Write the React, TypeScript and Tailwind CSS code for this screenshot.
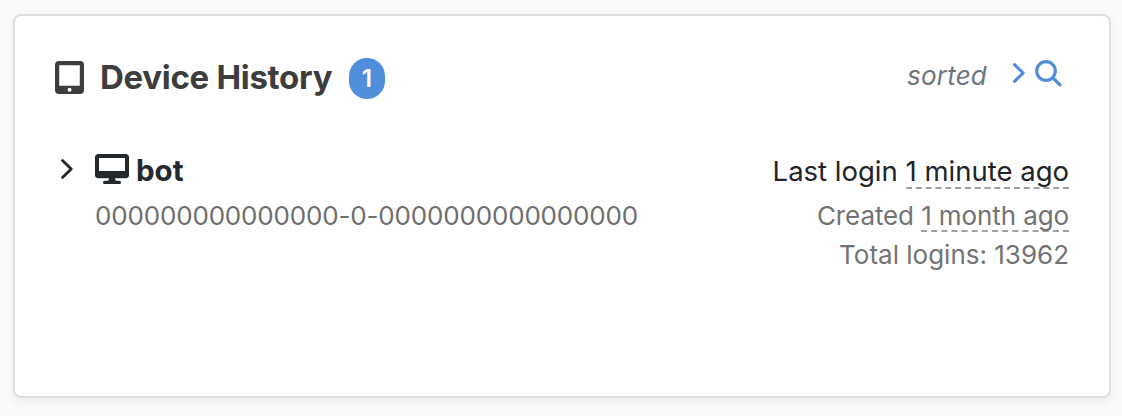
import React from "react";

function TabletIcon() {
  return (
    <svg className="h-[33px] w-[29px] shrink-0" viewBox="0 0 29 33" fill="currentColor">
      <path fillRule="evenodd" d="M4 0H25Q29 0 29 4V29Q29 33 25 33H4Q0 33 0 29V4Q0 0 4 0ZM4.2 4.2V24.7H24.8V4.2ZM14.6 26.7A2 2 0 1 0 14.6 30.7A2 2 0 1 0 14.6 26.7Z" />
    </svg>
  );
}

function DesktopIcon() {
  return (
    <svg className="h-[30px] w-[34px] shrink-0" viewBox="0 0 34 30" fill="currentColor">
      <path fillRule="evenodd" d="M3.5 0H30.5Q34 0 34 3.5V20.8Q34 24.3 30.5 24.3H20L20.8 26.8H24.4Q26 26.8 26 28.4T24.4 30H9.6Q8 30 8 28.4T9.6 26.8H13.2L14 24.3H3.5Q0 24.3 0 20.8V3.5Q0 0 3.5 0ZM4 4V17H30V4Z" />
    </svg>
  );
}

function Chevron({ className }: { className: string }) {
  return (
    <svg className={className} viewBox="0 0 12 20" fill="none" stroke="currentColor" strokeLinecap="round" strokeLinejoin="round">
      <path d="M1.5 1.6L10.2 10L1.5 18.4" />
    </svg>
  );
}

function SearchIcon() {
  return (
    <svg className="h-[27px] w-[27px]" viewBox="0 0 27 27" fill="none" stroke="currentColor" strokeWidth="3.2" strokeLinecap="round">
      <circle cx="11" cy="11" r="9.3" />
      <path d="M18 18L25 24.8" />
    </svg>
  );
}

export default function App() {
  return (
    <main className="h-[416px] bg-[#fafafa] pl-[13px] pr-[11px] pt-[14px] font-['Inter',sans-serif]">
      <section className="h-[384px] rounded-lg border-2 border-[#dedede] bg-white pl-[40px] pr-[40px] pt-[40px] shadow-[0_4px_10px_rgba(0,0,0,0.06)]">
        <header className="flex h-[42px] items-start justify-between text-[#3d3d3d]">
          <div className="flex h-[42px] items-center">
            <TabletIcon />
            <h2 className="ml-[16px] w-[233px] whitespace-nowrap text-[33px] font-bold leading-[40px] tracking-[-0.3px]">Device History</h2>
            <span className="ml-[16px] mt-[2px] flex h-[41px] w-[36px] items-center justify-center rounded-[18px] bg-[#508edc] text-[24.5px] font-semibold leading-none text-white">1</span>
          </div>
          <div className="mr-[7px] flex items-start">
            <span className="mr-[26px] pt-[4px] text-[26px] italic leading-8 tracking-[0.2px] text-[#6c757d]">sorted</span>
            <button className="mt-[4px] flex items-center text-[#508edc]" aria-label="Search">
              <Chevron className="mb-px mr-[10px] h-5 w-3 stroke-[3.1]" />
              <SearchIcon />
            </button>
          </div>
        </header>
        <div className="flex justify-between pt-[54px]">
          <div className="flex">
            <Chevron className="ml-[6px] mt-[7px] h-5 w-3 stroke-[2.8] text-[#212529]" />
            <div className="ml-[22px]">
              <div className="flex h-[40px] text-[#25292d]">
                <span className="mt-[2px]"><DesktopIcon /></span>
                <strong className="ml-[7px] text-[29.5px] font-bold leading-[36px]">bot</strong>
              </div>
              <p className="mt-[8px] whitespace-nowrap text-[26px] leading-8 tracking-[-0.17px] text-[#6f6f6f]">000000000000000-0-0000000000000000</p>
            </div>
          </div>
          <div className="flex flex-col items-end whitespace-nowrap text-[26px] text-[#737373]">
            <p className="mt-[2px] h-[34px] text-[27.5px] leading-[34px] text-[#212529]">
              Last login <time className="inline-block h-[35px] border-b-2 border-dashed border-[#a0a0a0]">1 minute ago</time>
            </p>
            <p className="mt-[12px] h-8 leading-8 tracking-[-0.1px]">
              Created <time className="inline-block h-[32px] border-b-2 border-dashed border-[#a0a0a0]">1 month ago</time>
            </p>
            <p className="mt-[7px] leading-8">Total logins: 13962</p>
          </div>
        </div>
      </section>
    </main>
  );
}
